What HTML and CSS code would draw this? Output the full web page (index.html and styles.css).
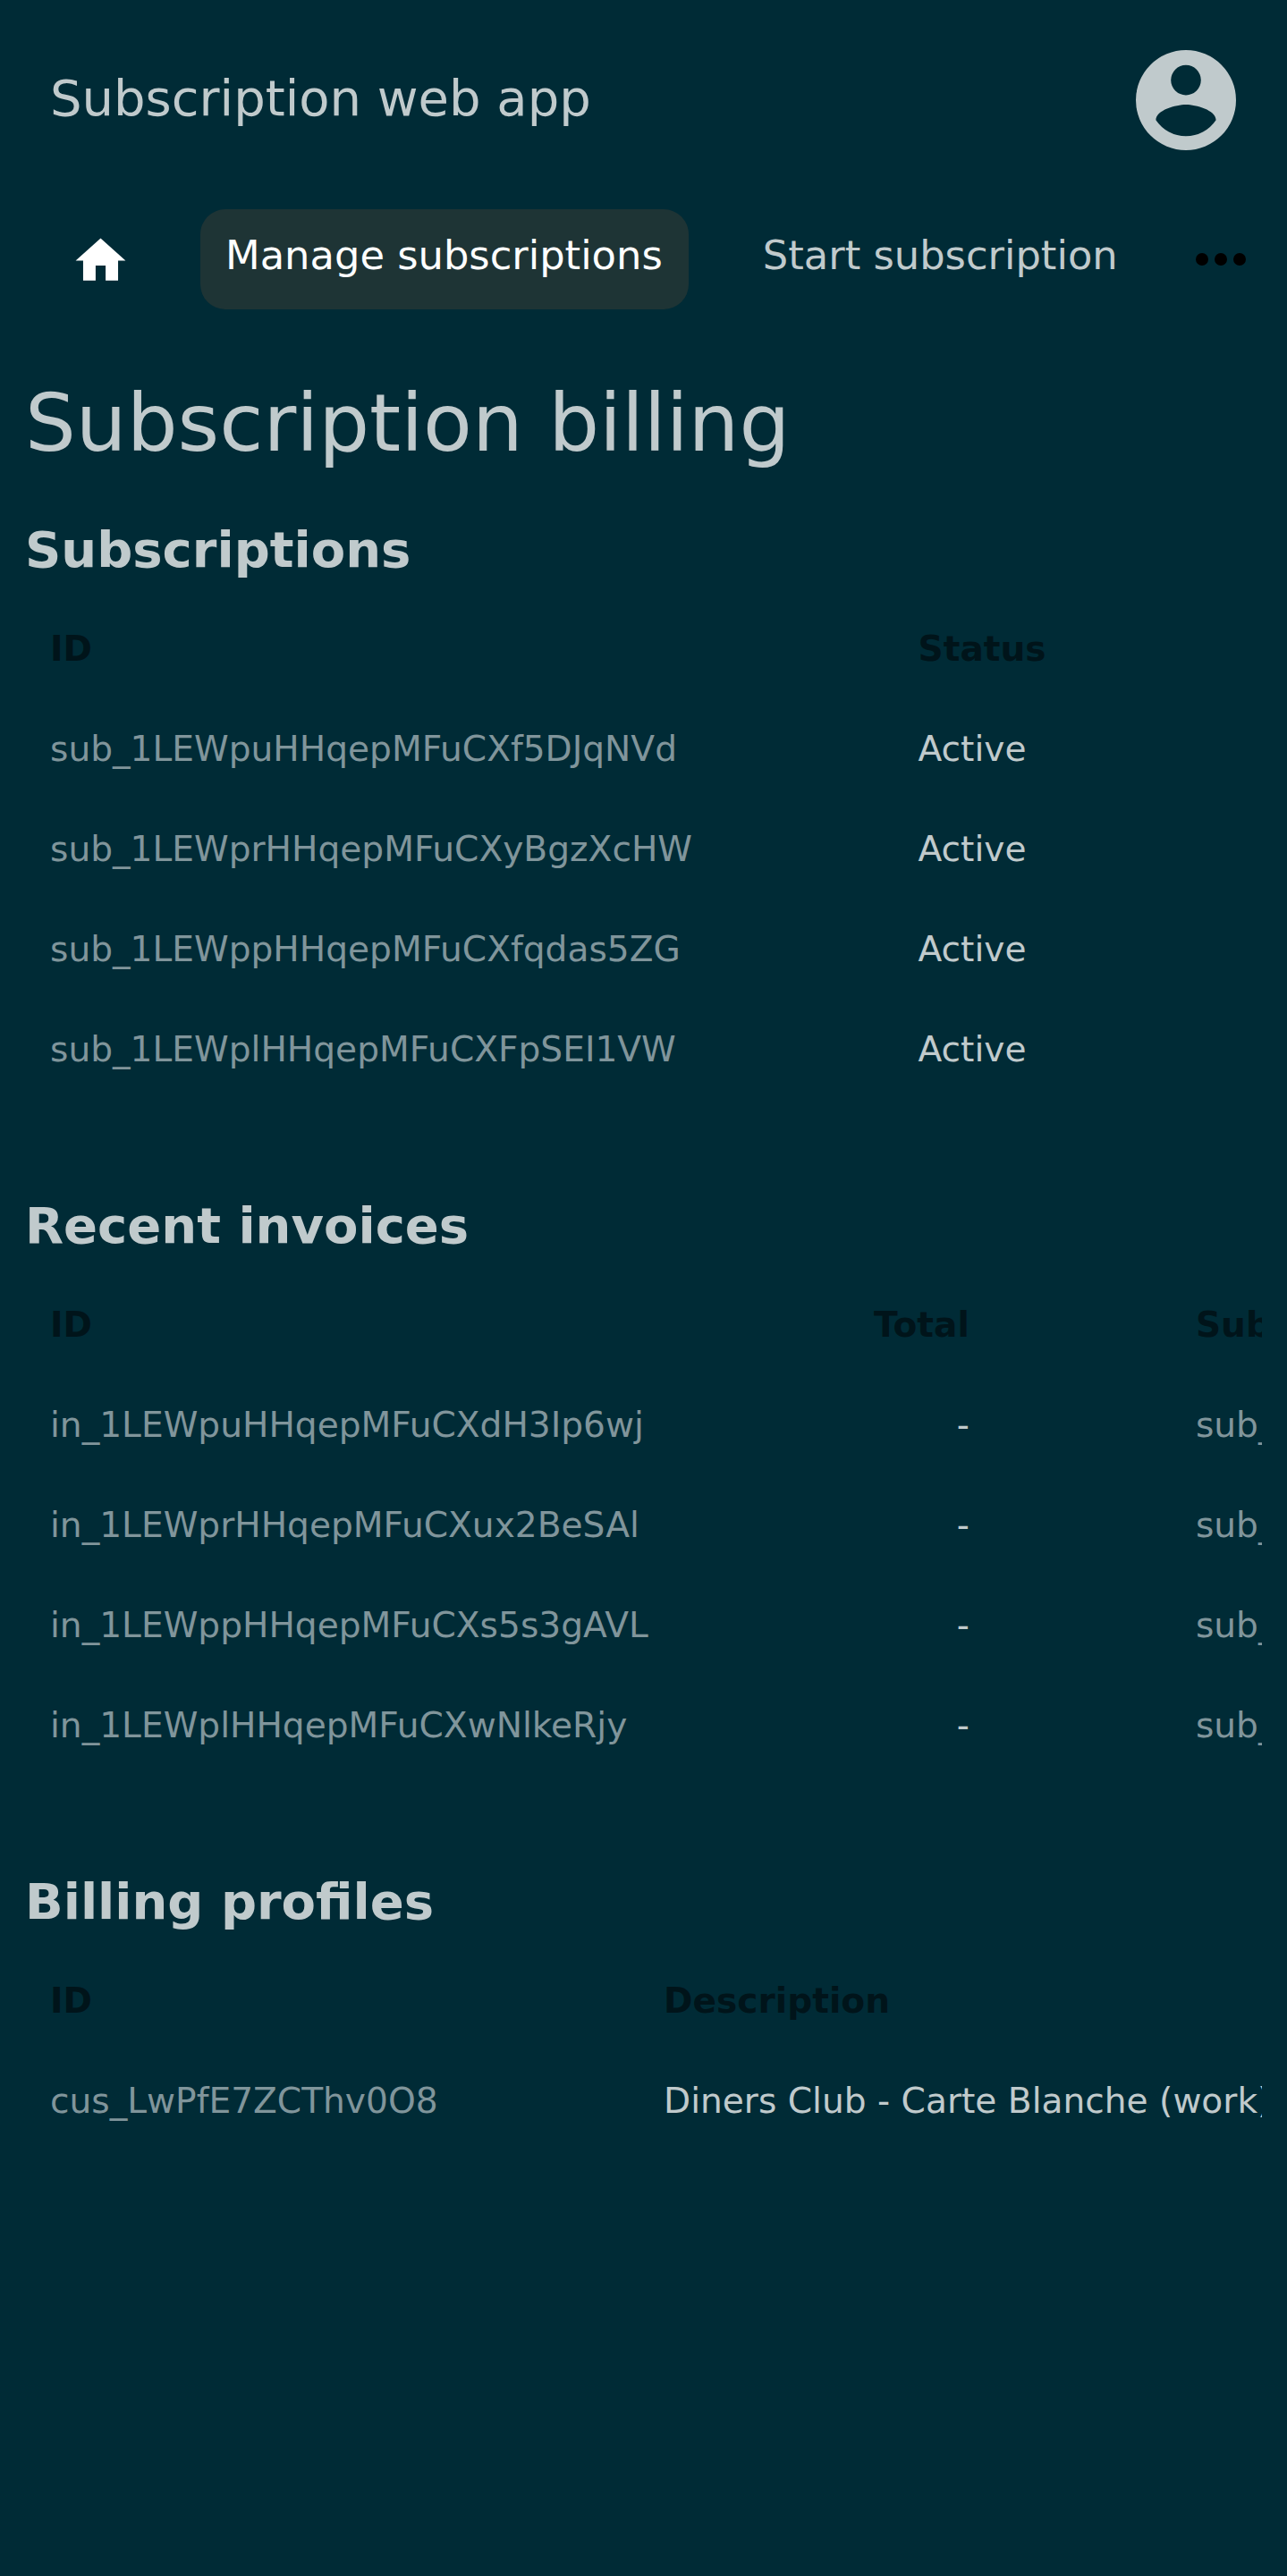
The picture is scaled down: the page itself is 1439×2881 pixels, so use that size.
FILE: index.html
```html
<!DOCTYPE html>
<html lang="en"><head><meta charset="utf-8"><title>Subscription web app</title><link rel="stylesheet" href="styles.css"></head>
<body>
<header class="header"><span class="brand">Subscription web app</span>
<svg class="avatar" viewBox="2 2 20 20"><path fill-rule="evenodd" d="M12 2a10 10 0 1 0 0 20a10 10 0 1 0 0-20zm0 3a3 3 0 1 1 0 6a3 3 0 1 1 0-6zm0 14.2a7.200 7.200 0 0 1-6-3.220c.03-1.990 4-3.080 6-3.080s5.970 1.090 6 3.080a7.200 7.200 0 0 1-6 3.220z"/></svg></header>
<nav class="nav"><a class="home"><svg viewBox="0 0 24 24"><path d="M10 20v-6h4v6h5v-8h3L12 3 2 12h3v8z"/></svg></a><a class="tab active">Manage subscriptions</a><a class="tab">Start subscription</a><svg class="more" viewBox="0 0 56 14"><circle cx="7" cy="7" r="7"/><circle cx="28" cy="7" r="7"/><circle cx="49" cy="7" r="7"/></svg></nav>
<main class="content">
<h1>Subscription billing</h1>
<section><h2>Subscriptions</h2><div class="scroll"><table>
<tr><th class="sub-id">ID</th><th>Status</th></tr>
<tr><td class="id">sub_1LEWpuHHqepMFuCXf5DJqNVd</td><td>Active</td></tr>
<tr><td class="id">sub_1LEWprHHqepMFuCXyBgzXcHW</td><td>Active</td></tr>
<tr><td class="id">sub_1LEWppHHqepMFuCXfqdas5ZG</td><td>Active</td></tr>
<tr><td class="id">sub_1LEWplHHqepMFuCXFpSEI1VW</td><td>Active</td></tr>
</table></div></section>
<section><h2>Recent invoices</h2><div class="scroll"><table>
<tr><th class="inv-id">ID</th><th class="total">Total</th><th class="inv-sub">Subscription</th></tr>
<tr><td class="id">in_1LEWpuHHqepMFuCXdH3Ip6wj</td><td class="total">-</td><td class="id inv-sub">sub_1LEWpuHHqepMFuCXf5DJqNVd</td></tr>
<tr><td class="id">in_1LEWprHHqepMFuCXux2BeSAl</td><td class="total">-</td><td class="id inv-sub">sub_1LEWprHHqepMFuCXyBgzXcHW</td></tr>
<tr><td class="id">in_1LEWppHHqepMFuCXs5s3gAVL</td><td class="total">-</td><td class="id inv-sub">sub_1LEWppHHqepMFuCXfqdas5ZG</td></tr>
<tr><td class="id">in_1LEWplHHqepMFuCXwNlkeRjy</td><td class="total">-</td><td class="id inv-sub">sub_1LEWplHHqepMFuCXFpSEI1VW</td></tr>
</table></div></section>
<section><h2>Billing profiles</h2><div class="scroll"><table>
<tr><th class="prof-id">ID</th><th>Description</th></tr>
<tr><td class="id">cus_LwPfE7ZCThv0O8</td><td>Diners Club - Carte Blanche (work)</td></tr>
</table></div></section>
</main></body></html>
```
FILE: styles.css
```css
*{box-sizing:border-box}
html{background:#002b36}
body{margin:0;color:#c0cacc;font-family:"DejaVu Sans",sans-serif;overflow:hidden}
.header{display:flex;justify-content:space-between;align-items:center;height:224px;padding:0 57px 0 56px}
.brand{font-size:56px;padding-bottom:5px}
.avatar{width:112px;height:112px;fill:#c0cacc}
.nav{display:flex;height:133px;padding:10.4px 46px 0 0;align-items:flex-start;font-size:44.8px}
.home{width:224px;padding:23.6px 0 0 78.5px}
.home svg{display:block;width:67px;height:67px;fill:#fff}
.tab{height:112px;line-height:103px;padding:0 28px;border-radius:28px;white-space:nowrap}
.active{padding-right:29px;margin-right:55px;background:#1e3435;color:#fff}
.more{width:56px;height:14px;margin:49.1px 0 0 auto;flex:none}
.content{padding:0 28px;font-size:39.14px}
h1{margin:60px 0 0;font-size:89.600px;line-height:112px;font-weight:400}
h2{margin:30px 0 -2px;font-size:56px;line-height:112px}
section+section{margin-top:86px}
.scroll{overflow:hidden}
table{border-collapse:collapse;white-space:nowrap}
th,td{height:112px;padding:0 28px;text-align:left}
th{color:#00141a}
.id{color:#80959b}
.sub-id{width:970.5px;min-width:970.5px}
.inv-id{width:921px;min-width:921px}
.prof-id{width:686px;min-width:686px}
th.total,td.total{text-align:right}
th.inv-sub,td.inv-sub{padding-left:225px}
```
